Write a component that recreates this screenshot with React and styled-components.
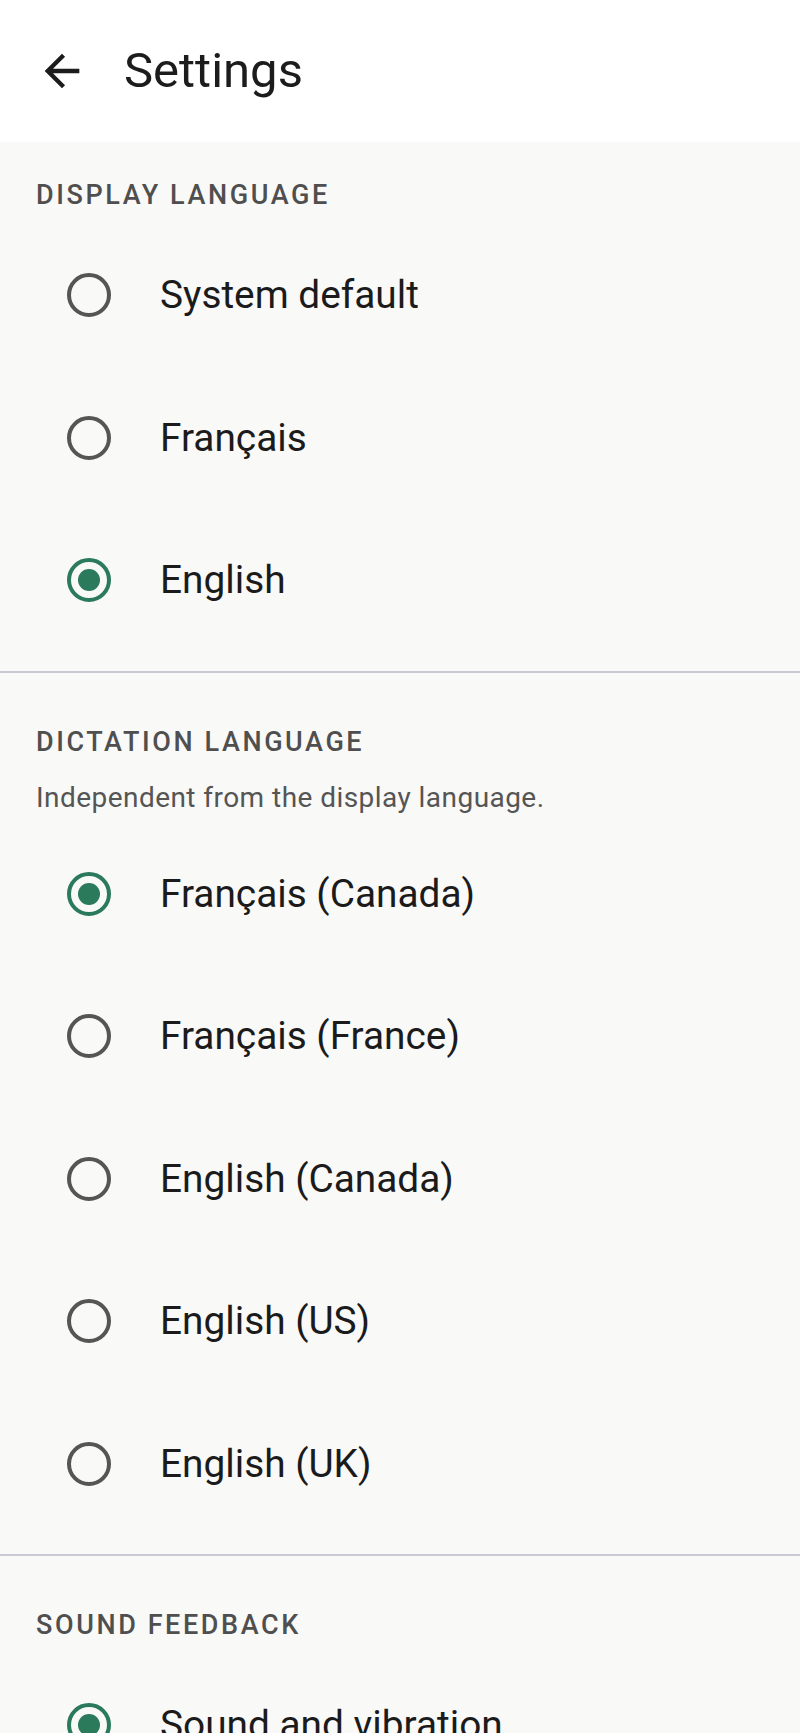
import React, { useState } from 'react'
import styled, { createGlobalStyle } from 'styled-components'

const GlobalStyle = createGlobalStyle`
  html, body {
    margin: 0;
    padding: 0;
    background: #f9f9f8;
    font-family: Roboto, "Liberation Sans", sans-serif;
    overflow: hidden;
  }
  * { box-sizing: border-box; }
`

const sections = [
  {
    id: 'display',
    title: 'Display language',
    options: ['System default', 'Français', 'English'],
    initial: 'English'
  },
  {
    id: 'dictation',
    title: 'Dictation language',
    hint: 'Independent from the display language.',
    options: ['Français (Canada)', 'Français (France)', 'English (Canada)', 'English (US)', 'English (UK)'],
    initial: 'Français (Canada)'
  },
  {
    id: 'sound',
    title: 'Sound feedback',
    options: ['Sound and vibration', 'Vibration only', 'None'],
    initial: 'Sound and vibration'
  }
]

const BackArrow = () => (
  <svg width="52" height="52" viewBox="0 0 24 24" fill="#1c1c1c">
    <path d="M20 11H7.83l5.59-5.59L12 4l-8 8 8 8 1.41-1.41L7.83 13H20v-2z" />
  </svg>
)

const Section = ({ section }) => {
  const [value, setValue] = useState(section.initial)
  return (
    <Group>
      <GroupTitle>{section.title}</GroupTitle>
      {section.hint && <Hint>{section.hint}</Hint>}
      <Options>
        {section.options.map((opt) => (
          <Option key={opt} onClick={() => setValue(opt)}>
            <Radio $checked={value === opt} />
            <Label>{opt}</Label>
          </Option>
        ))}
      </Options>
    </Group>
  )
}

const App = () => {
  return (
    <Screen>
      <GlobalStyle />
      <TopBar>
        <BackButton aria-label="Back"><BackArrow /></BackButton>
        <Title>Settings</Title>
      </TopBar>
      <Content>
        {sections.map((s, i) => (
          <React.Fragment key={s.id}>
            {i > 0 && <Divider />}
            <Section section={s} />
          </React.Fragment>
        ))}
      </Content>
    </Screen>
  )
}

const Screen = styled.div`
  width: 800px;
  height: 1733px;
  overflow: hidden;
  background: #f9f9f8;
`

const TopBar = styled.header`
  height: 142px;
  background: #fff;
  display: flex;
  align-items: center;
  padding-left: 36px;
`

const BackButton = styled.button`
  width: 52px;
  height: 52px;
  padding: 0;
  border: none;
  background: none;
  display: flex;
  align-items: center;
  justify-content: center;
  svg { display: block; }
`

const Title = styled.h1`
  margin: 0 0 0 36px;
  font-size: 49px;
  line-height: 48px;
  font-weight: 400;
  color: #1c1c1c;
`

const Content = styled.main`
  display: flex;
  flex-direction: column;
`

const Group = styled.section`
  padding: 37px 0 0;
  display: flex;
  flex-direction: column;
`

const GroupTitle = styled.h2`
  margin: 0;
  padding-left: 36px;
  font-size: 27px;
  line-height: 32px;
  font-weight: 500;
  letter-spacing: 0.096em;
  text-transform: uppercase;
  color: #4f4f4f;
`

const Hint = styled.p`
  margin: 24px 0 -4px;
  padding-left: 36px;
  font-size: 28px;
  line-height: 32px;
  letter-spacing: 0.45px;
  color: #555;
`

const Options = styled.ul`
  list-style: none;
  margin: 13px 0 0;
  padding: 0;
`

const Option = styled.li`
  height: 142.5px;
  display: flex;
  align-items: center;
  padding-left: 67px;
  gap: 49px;
  cursor: pointer;
`

const Radio = styled.span`
  flex: none;
  width: 44px;
  height: 44px;
  border-radius: 50%;
  border: 4px solid ${(p) => (p.$checked ? '#2b7a5b' : '#555')};
  display: flex;
  align-items: center;
  justify-content: center;
  &::after {
    content: '';
    width: 22px;
    height: 22px;
    border-radius: 50%;
    background: #2b7a5b;
    display: ${(p) => (p.$checked ? 'block' : 'none')};
  }
`

const Label = styled.span`
  font-size: 38.8px;
  line-height: 48px;
  color: #1b1b1b;
`

const Divider = styled.hr`
  margin: 19px 0 16px;
  border: none;
  height: 2px;
  background: #cacad6;
`

export default App
